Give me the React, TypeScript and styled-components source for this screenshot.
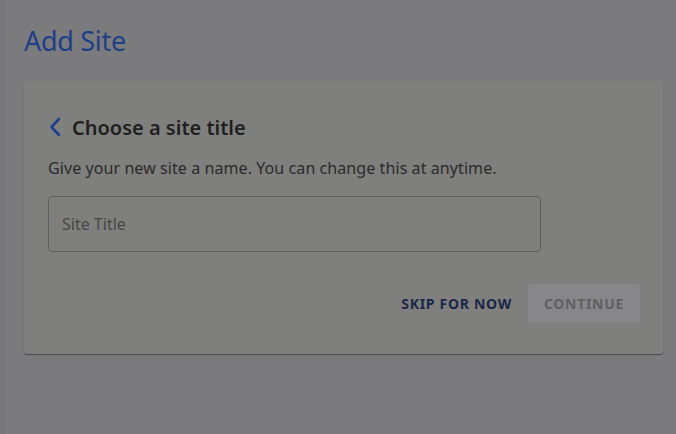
import React from "react";
import styled, { createGlobalStyle } from "styled-components";

const Global = createGlobalStyle`
  html, body { margin: 0; padding: 0; }
  body {
    background: #7b7b7d;
    font-family: "Noto Sans", "Open Sans", sans-serif;
    width: 676px;
    height: 434px;
    overflow: hidden;
  }
`;

const Shell = styled.div`
  display: flex;
  height: 434px;
`;

const SideEdge = styled.div`
  width: 5px;
  flex: none;
  background: #777779;
`;

const Main = styled.main`
  flex: 1;
  padding: 23px 13px 0 19px;
  display: flex;
  flex-direction: column;
`;

const PageTitle = styled.h1`
  margin: 0;
  font-size: 27px;
  font-weight: 400;
  line-height: 36px;
  color: #1e3f88;
  letter-spacing: -0.3px;
`;

const Card = styled.section`
  margin-top: 22px;
  background: #7f7f7d;
  border-radius: 3px;
  box-shadow: 0 1px 1px rgba(0, 0, 0, 0.4);
  padding: 31px 23px 31px 24px;
  display: flex;
  flex-direction: column;
`;

const HeadingRow = styled.div`
  display: flex;
  align-items: center;
  gap: 10px;
  height: 30px;
`;

const BackButton = styled.button`
  border: 0;
  background: none;
  padding: 0;
  width: 14px;
  height: 20px;
  display: flex;
  align-items: center;
  justify-content: center;
  cursor: pointer;
`;

const Heading = styled.h2`
  margin: 0;
  font-size: 20px;
  font-weight: 600;
  color: #1f1f1f;
`;

const Description = styled.p`
  margin: 15px 0 0;
  font-size: 16px;
  line-height: 22px;
  letter-spacing: 0.08px;
  color: #2b2b2b;
`;

const Field = styled.input`
  margin-top: 17px;
  width: 493px;
  height: 56px;
  box-sizing: border-box;
  border: 1px solid #5e5e60;
  border-radius: 4px;
  background: transparent;
  padding: 0 13px;
  font-family: inherit;
  font-size: 16px;
  color: #222;
  outline: none;
  &::placeholder { color: #474747; }
`;

const Actions = styled.div`
  margin-top: 32px;
  display: flex;
  justify-content: flex-end;
  align-items: center;
  gap: 16px;
`;

const ActionButton = styled.button<{ $primary?: boolean }>`
  font-family: inherit;
  font-size: 14px;
  font-weight: 700;
  letter-spacing: 0.7px;
  text-transform: uppercase;
  border: 0;
  border-radius: 4px;
  height: 39px;
  box-sizing: border-box;
  padding: ${(p) => (p.$primary ? "0 16px" : "0")};
  cursor: pointer;
  background: ${(p) => (p.$primary ? "#878789" : "transparent")};
  color: ${(p) => (p.$primary ? "#606060" : "#1a2846")};
`;

export default function App() {
  return (
    <>
      <Global />
      <Shell>
        <SideEdge />
        <Main>
          <PageTitle>Add Site</PageTitle>
          <Card>
            <HeadingRow>
              <BackButton aria-label="Back">
                <svg width="12" height="20" viewBox="0 0 12 20" fill="none">
                  <path d="M10 2 L2.5 10 L10 18" stroke="#1e3f88" strokeWidth="2.6" strokeLinecap="round" strokeLinejoin="round" />
                </svg>
              </BackButton>
              <Heading>Choose a site title</Heading>
            </HeadingRow>
            <Description>Give your new site a name. You can change this at anytime.</Description>
            <Field placeholder="Site Title" />
            <Actions>
              <ActionButton>Skip for now</ActionButton>
              <ActionButton $primary disabled>Continue</ActionButton>
            </Actions>
          </Card>
        </Main>
      </Shell>
    </>
  );
}
